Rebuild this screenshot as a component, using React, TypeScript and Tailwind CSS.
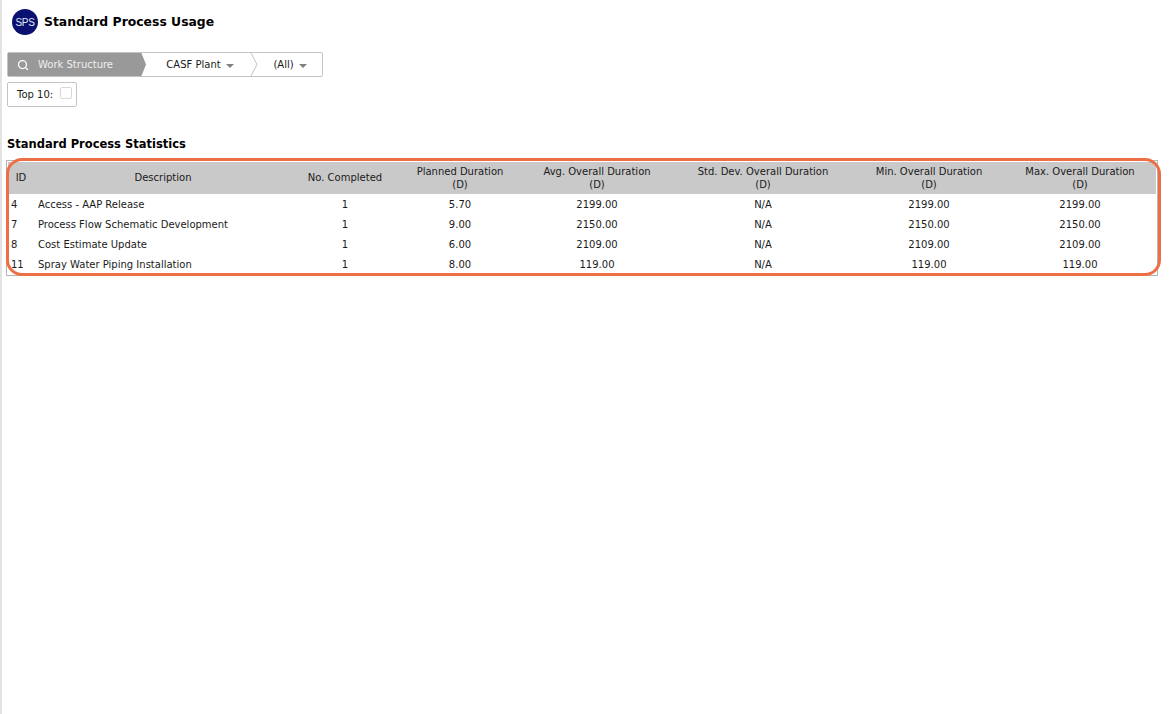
import { Search } from "lucide-react";

const font = "font-['DejaVu_Sans','Liberation_Sans',sans-serif]";

const rows = [
  { id: "4", name: "Access - AAP Release", done: "1", planned: "5.70", avg: "2199.00", std: "N/A", min: "2199.00", max: "2199.00" },
  { id: "7", name: "Process Flow Schematic Development", done: "1", planned: "9.00", avg: "2150.00", std: "N/A", min: "2150.00", max: "2150.00" },
  { id: "8", name: "Cost Estimate Update", done: "1", planned: "6.00", avg: "2109.00", std: "N/A", min: "2109.00", max: "2109.00" },
  { id: "11", name: "Spray Water Piping Installation", done: "1", planned: "8.00", avg: "119.00", std: "N/A", min: "119.00", max: "119.00" },
];

function Caret() {
  return <span className="ml-[5px] mt-[2px] inline-block h-0 w-0 border-x-[4px] border-t-[4px] border-x-transparent border-t-[#808080]" />;
}

export default function App() {
  return (
    <div className={`${font} h-[714px] w-[1170px] overflow-hidden border-l-2 border-[#e3e3e3] bg-white text-[10px] text-[#1a1a1a]`}>
      <div className="flex h-[44px] items-center pl-[10px]">
        <div className="flex h-[26px] w-[26px] items-center justify-center rounded-full bg-[#0a1170] font-['Liberation_Sans'] text-[10px] font-medium tracking-[-0.3px] text-[#e4e6f4]">
          SPS
        </div>
        <h1 className="ml-[6px] text-[12.4px] font-bold text-black">Standard Process Usage</h1>
      </div>

      <div className="relative ml-[5px] mt-[8px] flex h-[25px] w-[316px] items-center rounded-[2px] border border-[#c4c4c4]">
        <div className="flex h-full w-[133px] shrink-0 items-center bg-[#999999] pl-[9px] text-[#eeeeee]">
          <Search size={12} strokeWidth={2.5} className="text-white" />
          <span className="ml-[9px]">Work Structure</span>
        </div>
        <svg width="6" height="25" viewBox="0 0 6 25" className="-my-px shrink-0">
          <path d="M0 0 L5 12.5 L0 25 Z" fill="#999999" />
        </svg>
        <div className="flex h-full w-[103px] shrink-0 items-center justify-center pl-[3px]">
          <span>CASF Plant</span>
          <Caret />
        </div>
        <svg width="8" height="23" viewBox="0 0 8 23" className="shrink-0">
          <path d="M1 0 L7 11.5 L1 23" fill="none" stroke="#c4c4c4" />
        </svg>
        <div className="flex h-full flex-1 items-center justify-center">
          <span>(All)</span>
          <Caret />
        </div>
      </div>

      <div className="ml-[5px] mt-[5px] flex h-[25px] w-[70px] items-center rounded-[2px] border border-[#c4c4c4] pl-[9px]">
        <span>Top 10:</span>
        <span className="mb-[3px] ml-[7px] h-[12px] w-[12px] rounded-[2px] border border-[#d8d8d8] bg-white" />
      </div>

      <h2 className="ml-[5px] mt-[29px] text-[11.5px] leading-[16px] font-bold text-black">Standard Process Statistics</h2>

      <div className="relative ml-[4px] mt-[8px] w-[1152px] border border-[#b5b5b5] p-px">
        <table className="w-full table-fixed border-collapse">
          <colgroup>
            <col className="w-[26px]" />
            <col className="w-[258px]" />
            <col className="w-[106px]" />
            <col className="w-[124px]" />
            <col className="w-[150px]" />
            <col className="w-[182px]" />
            <col className="w-[150px]" />
            <col />
          </colgroup>
          <thead>
            <tr className="h-[32px] bg-[#c9c9c9] text-center leading-[13px] [&>th]:font-normal">
              <th className="pb-[2px]">ID</th>
              <th className="pb-[2px]">Description</th>
              <th className="pb-[2px]">No. Completed</th>
              <th>Planned Duration<br />(D)</th>
              <th>Avg. Overall Duration<br />(D)</th>
              <th>Std. Dev. Overall Duration<br />(D)</th>
              <th>Min. Overall Duration<br />(D)</th>
              <th>Max. Overall Duration<br />(D)</th>
            </tr>
          </thead>
          <tbody>
            {rows.map((row) => (
              <tr key={row.id} className="h-[20px] text-center">
                <td className="pl-[3px] text-left">{row.id}</td>
                <td className="pl-[4px] text-left">{row.name}</td>
                <td>{row.done}</td>
                <td>{row.planned}</td>
                <td>{row.avg}</td>
                <td>{row.std}</td>
                <td>{row.min}</td>
                <td>{row.max}</td>
              </tr>
            ))}
          </tbody>
        </table>
        {/* Orange callout drawn over the table */}
        <div className="pointer-events-none absolute -left-px -top-[3px] h-[118px] w-[1155px] rounded-[16px] border-[3px] border-[#ee6f45]" />
      </div>
    </div>
  );
}
